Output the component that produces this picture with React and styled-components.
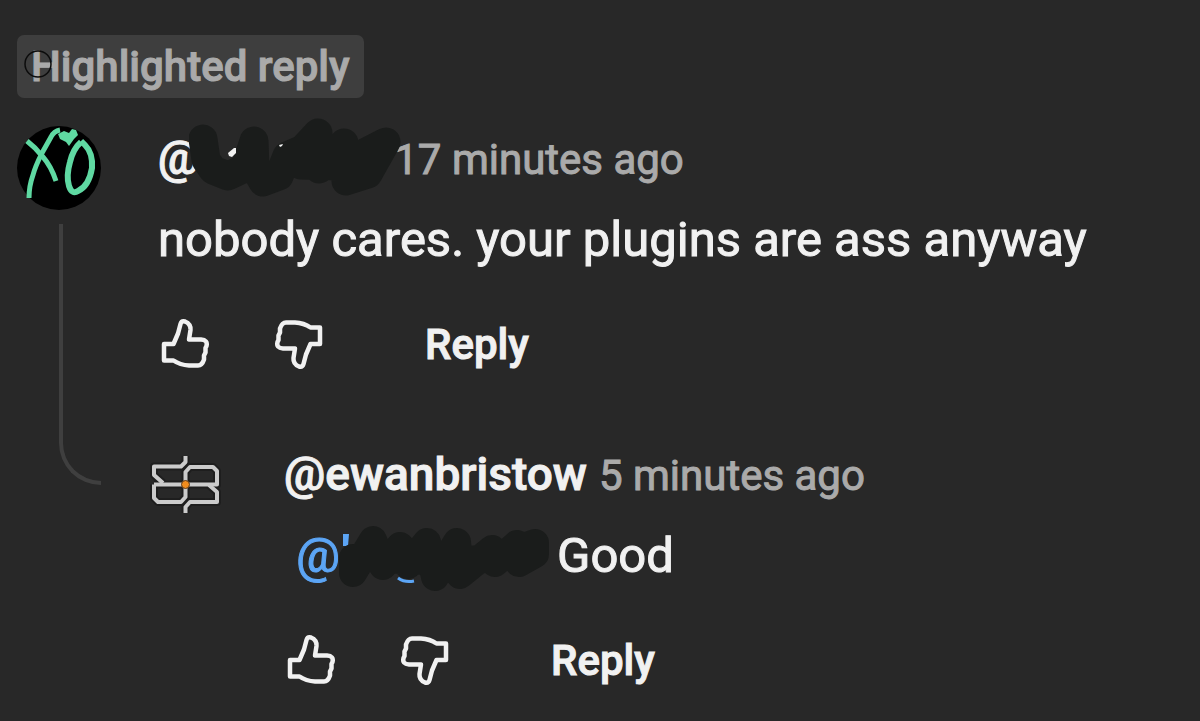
import React from 'react'
import { styled, createGlobalStyle } from 'styled-components'

const GlobalStyle = createGlobalStyle`
body{
margin:0;
background:#282828;
font-family:Roboto, "Liberation Sans", sans-serif;
-webkit-text-stroke:1px currentColor;
}
`

const Page = styled.main`
padding:35px 17px 0px;
color:#f1f1f1;
`

const Badge = styled.div`
position:relative;
display:inline-block;
padding:0px 14px;
border-radius:7px;
background:#3e3e3e;
color:#aaa;
font-size:42px;
font-weight:500;
line-height:63px;
`

const BrushCursor = styled.svg`
position:absolute;
left:7px;
top:15px;
width:28px;
height:28px;
`

const Thread = styled.section`
display:grid;
grid-template-columns:84px 1fr;
column-gap:41px;
margin-top:28px;
`

const Rail = styled.div`
display:flex;
flex-direction:column;
gap:14px;
`

const Line = styled.div`
flex:1;
width:42px;
margin-left:42px;
border-left:4px solid #3f3f3f;
box-sizing:border-box;
`

const Elbow = styled.div`
width:42px;
height:43px;
margin-left:42px;
box-sizing:border-box;
border-left:4px solid #3f3f3f;
border-bottom:4px solid #3f3f3f;
border-bottom-left-radius:42px;
`

const Avatar = styled.svg`
display:block;
flex:none;
width:84px;
height:84px;
`

const Reply = styled.article`
display:flex;
gap:58px;
`

const Body = styled.div`
flex:1;
min-width:0;
padding-left:${({ $root }) => ($root ? '16px' : '0px')};
padding-bottom:${({ $root }) => ($root ? '41px' : '0px')};
`

const Header = styled.header`
display:flex;
align-items:baseline;
gap:12px;
height:63px;
margin-top:1px;
font-size:42px;
line-height:63px;
`

const Author = styled.a`
color:#f1f1f1;
font-size:46px;
font-weight:500;
text-decoration:none;
`

const Time = styled.a`
color:#aaa;
text-decoration:none;
`

const Text = styled.p`
margin:15px 0px 0px;
font-size:49px;
line-height:70px;
`

const Mention = styled.a`
margin-left:12px;
margin-right:12px;
color:#5ca5f5;
text-decoration:none;
`

const Hidden = styled.span`
position:relative;
display:inline-block;
width:${({ $width }) => $width};
`

const Scribble = styled.svg`
position:absolute;
left:${({ $left }) => $left};
bottom:${({ $bottom }) => $bottom};
width:220px;
height:80px;
`

const Actions = styled.div`
display:flex;
align-items:center;
gap:58px;
height:113px;
margin-top:13px;
`

const IconButton = styled.button`
padding:0px;
border:0px;
background:none;
color:#f1f1f1;
cursor:pointer;
svg{
display:block;
width:56px;
height:56px;
}
`

const ReplyButton = styled.button`
margin-left:39px;
padding:0px;
border:0px;
background:none;
color:#f1f1f1;
font-family:inherit;
font-size:42px;
font-weight:500;
line-height:63px;
cursor:pointer;
-webkit-text-stroke:1px currentColor;
`

const Thumb = ({ down }) => (
  <svg viewBox="1 1 56 56" fill="none" stroke="currentColor" strokeWidth="4.5" strokeLinejoin="round">
    <path
      transform={down ? 'rotate(180 28 28)' : undefined}
      d="M7 28H16.5L21 17.5L23.5 8Q24.5 4.5 28 5.5Q34 8 33.5 14L32 23.5H44Q51 24 49.5 30L48.5 32V36.5L47 39.5V43.5Q45 49.5 41 49.5H32Q23 49 16.5 44.5H7Z"
    />
  </svg>
)

const ActionBar = () => (
  <Actions>
    <IconButton aria-label="Like"><Thumb /></IconButton>
    <IconButton aria-label="Dislike"><Thumb down /></IconButton>
    <ReplyButton>Reply</ReplyButton>
  </Actions>
)

const XoAvatar = () => (
  <Avatar viewBox="0 0 84 84" role="img" aria-label="XO">
    <circle cx="42" cy="42" r="42" fill="#000" />
    <g fill="none" stroke="#5fd9a2" strokeLinejoin="round">
      <path strokeWidth="5" d="M43 4Q37 5 34 11L25 27Q18 41 16 49Q12 60 12 72" />
      <path strokeWidth="5" d="M10 15L18 22L26 31Q34 40 39 55" />
      <path strokeWidth="6" d="M64 16Q56 23 53 36Q49 50 52 60Q55 69 61 65Q72 60 75 42Q76 27 68 19L64 15" />
    </g>
    <path fill="#5fd9a2" d="M41 8L47 5L52 7L55 3L59 4L61 9L57 13L52 20L49 16L43 13Z" />
  </Avatar>
)

const LogoAvatar = () => (
  <Avatar viewBox="-1 0 84 84" role="img" aria-label="ewanbristow">
    <g fill="none" strokeLinejoin="round">
      {[['#1e1e1e', 8], ['#cbcbcb', 4]].map(([color, width]) => (
        <g key={color} stroke={color} strokeWidth={width}>
          <path d="M42.5 14V20L38 24.5H11V33L20 41" />
          <path d="M11 42.5H74V29L70 25H47L42.5 30V55L38 60H15L11 56V42.5" />
          <path d="M66 43L74 50V60H47L42.5 65V71" />
        </g>
      ))}
    </g>
    <circle cx="42.5" cy="42.5" r="4" fill="#f08c1e" stroke="#5a3a1a" />
  </Avatar>
)

const App = () => {
  return (
    <>
      <GlobalStyle />
      <Page>
        <Badge>
          Highlighted reply
          <BrushCursor viewBox="0 0 28 28" fill="none">
            <circle cx="14" cy="14" r="13" stroke="#0c0c0c" strokeWidth="1.5" />
          </BrushCursor>
        </Badge>
        <Thread>
          <Rail>
            <XoAvatar />
            <Line />
          </Rail>
          <Body $root>
            <Header>
              <Author href="#">
                @
                <Hidden $width="183px">
                  <Scribble $left="-10px" $bottom="-24px" viewBox="0 0 220 80" fill="none">
                    <path
                      stroke="#1a1c1b"
                      strokeWidth="29"
                      strokeLinecap="round"
                      strokeLinejoin="round"
                      d="M14 21L17 42L24 52L39 58L56 50L65 23L66 50L74 64L90 58L98 38L114 31L129 15L130 51L155 25L157 63L179 56L197 24L150 48L112 47"
                    />
                    <g fill="#f1f1f1">
                      <path d="M39 35L45 30H47V35L43 39L40 38Z" />
                      <path d="M90 27L94 26L93 28L91 29Z" />
                    </g>
                  </Scribble>
                </Hidden>
              </Author>
              <Time href="#">17 minutes ago</Time>
            </Header>
            <Text>nobody cares. your plugins are ass anyway</Text>
            <ActionBar />
          </Body>
          <Elbow />
          <Reply>
            <LogoAvatar />
            <Body>
              <Header>
                <Author href="#">@ewanbristow</Author>
                <Time href="#">5 minutes ago</Time>
              </Header>
              <Text>
                <Mention href="#">
                  @
                  <Hidden $width="205px">
                    <Scribble $left="-2px" $bottom="-33px" viewBox="0 0 220 80" fill="none">
                      <path fill="#5ca5f5" d="M5 9H11L10 21H5Z" />
                      <path
                        stroke="#1a1c1b"
                        strokeWidth="28"
                        strokeLinecap="round"
                        strokeLinejoin="round"
                        d="M15 33V48L35 15L45 41L62 21L70 40L89 17L97 52L119 17L122 50L154 24L157 38L179 19L181 38L197 29V18L150 34L97 36L36 34"
                      />
                      <path stroke="#5ca5f5" strokeWidth="3" d="M60 53Q67 58 76 56" />
                    </Scribble>
                  </Hidden>
                </Mention>
                Good
              </Text>
              <ActionBar />
            </Body>
          </Reply>
        </Thread>
      </Page>
    </>
  )
}

export default App
